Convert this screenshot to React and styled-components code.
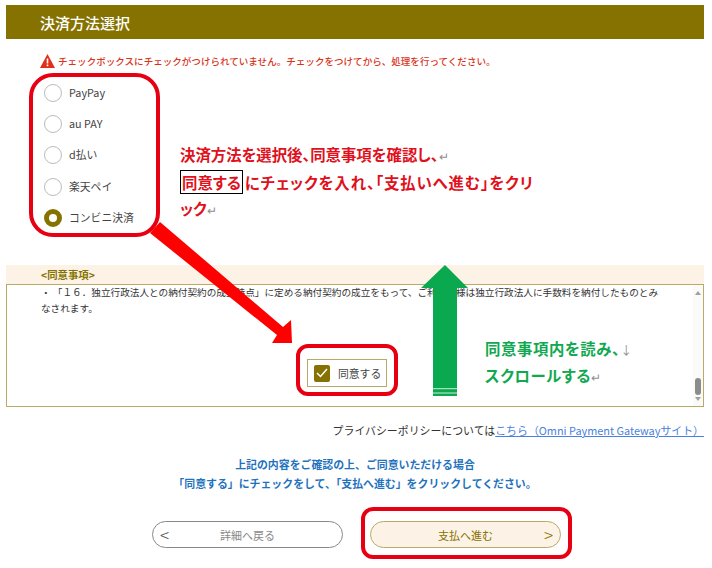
import React from 'react';
import styled, { createGlobalStyle } from 'styled-components';

const Global = createGlobalStyle`
  html, body { margin: 0; padding: 0; background: #fff; }
  body { font-family: "Noto Sans CJK JP", "Noto Sans", sans-serif; }
`;
const OLIVE = '#857200';
const GOLD = '#b9aa68';
const CREAM = '#fdf2e6';
const MARKER = '#e60012';

const Page = styled.div`
  position: relative; width: 712px; height: 568px; overflow: hidden;
  padding: 5px 8px 0 6px; box-sizing: border-box;
`;
const TitleBar = styled.h1`
  margin: 0; height: 34px; background: ${OLIVE}; color: #fff; padding-left: 34px;
  font-size: 15px; font-weight: 500; line-height: 36px;
`;
const ErrorRow = styled.div`
  display: flex; align-items: center; gap: 3px; margin: 14px 0 0 34px; height: 16px;
  color: #d9331a; font-size: 9.55px; font-weight: 500; white-space: nowrap;
`;
const RadioFrame = styled.div`
  display: flex; flex-direction: column; gap: 13.2px; box-sizing: border-box;
  width: 131px; height: 164px; margin: 4px 0 0 23px; padding: 7px 0 0 11px;
  border: 4px solid ${MARKER}; border-radius: 24px;
`;
const RadioRow = styled.label`
  display: flex; align-items: center; gap: 7px; height: 18px;
  font-size: 10.8px; color: #444;
`;
const RadioMark = styled.span`
  width: 18px; height: 18px; box-sizing: border-box; border-radius: 50%; background: #fff;
  border: ${p => (p.$on ? `5.5px solid ${OLIVE}` : '1px solid #bbb')};
`;
const RadioText = styled.span`
  margin-top: -2px;
`;
const AgreementHead = styled.div`
  margin-top: 28px; height: 19px; background: ${CREAM}; padding-left: 35px;
  color: ${OLIVE}; font-size: 10.4px; font-weight: 700; line-height: 19px;
`;
const AgreementBox = styled.div`
  position: relative; height: 123px; box-sizing: border-box; border: 1px solid ${GOLD};
  padding: 0 0 0 34px; font-size: 9.65px; line-height: 16px; color: #333; background: #fff;
`;
const Clause = styled.p`
  margin: -1px 0 0; white-space: pre-line;
`;
const AgreeFrame = styled.div`
  display: flex; box-sizing: border-box; width: 102px; height: 52px;
  margin: 28px 0 0 255px; padding: 11px 0 0 7px;
  border: 4px solid ${MARKER}; border-radius: 12px;
`;
const AgreeLabel = styled.label`
  display: flex; align-items: center; gap: 8px; width: 80px; height: 28px; box-sizing: border-box;
  border: 1px solid ${GOLD}; padding-left: 6px; font-size: 10.8px; color: #444; white-space: nowrap; background: #fff;
`;
const CheckMark = styled.span`
  display: flex; align-items: center; justify-content: center; width: 16px; height: 17px;
  background: ${OLIVE}; border-radius: 2px;
`;
const ScrollTrack = styled.div`
  position: absolute; top: 0; right: 0; bottom: 0; width: 10px; background: #fafafa;
  display: flex; flex-direction: column; align-items: center; padding: 6px 0 5px; box-sizing: border-box;
`;
const ScrollArrowUp = styled.span`
  width: 0; height: 0;
  border: 3px solid transparent; border-top-width: 0; border-bottom: 4px solid #a0a0a0;
`;
const ScrollArrowDown = styled.span`
  width: 0; height: 0; margin-top: 2px;
  border: 3px solid transparent; border-bottom-width: 0; border-top: 4px solid #a0a0a0;
`;
const ScrollThumb = styled.span`
  width: 6px; height: 17px; margin-top: auto; border-radius: 3px; background: #8c8c8c;
`;
const PrivacyLine = styled.p`
  margin: 15px 0 0; text-align: right; font-size: 10.9px; line-height: 16px; color: #333; white-space: nowrap;
`;
const PrivacyLink = styled.a`
  color: #4a7fe0; text-decoration: underline;
`;
const Notice = styled.p`
  margin: 17px 0 0; text-align: center; font-size: 10.9px; font-weight: 700; line-height: 19px; color: #1f72bd;
`;
const ButtonRow = styled.div`
  display: flex; align-items: flex-start; gap: 18px; margin: 14px 0 0 146px;
`;
const BackSlot = styled.div`
  padding-top: 14px;
`;
const ForwardFrame = styled.div`
  box-sizing: border-box; width: 211px; height: 52px; padding: 10px 0 0 5px;
  border: 4px solid ${MARKER}; border-radius: 12px;
`;
const PillButton = styled.button`
  display: grid; grid-template-columns: 30px 1fr 30px; align-items: center; text-align: center;
  width: 191px; height: 27px; box-sizing: border-box; border-radius: 14px; padding: 0 7px; font: inherit; font-size: 11px;
  background: ${p => (p.$primary ? CREAM : '#fff')};
  border: 1px solid ${p => (p.$primary ? GOLD : '#888')};
  color: ${p => (p.$primary ? OLIVE : '#888')};
`;
const Chevron = styled.span`
  font-size: 17px; font-weight: 300; line-height: 20px; text-align: ${p => (p.$right ? 'right' : 'left')};
  color: ${p => (p.$right ? OLIVE : '#555')};
`;
const ArrowLayer = styled.svg`
  position: absolute; left: 0; top: 0; width: 712px; height: 568px; pointer-events: none;
`;
const RedNote = styled.div`
  position: absolute; left: 180px; top: 141px; width: 360px; color: #e0101c;
  font-size: 15.4px; font-weight: 700; line-height: 26px; font-feature-settings: "palt"; white-space: nowrap;
`;
const WideLine = styled.span`
  letter-spacing: 0.85px;
`;
const GreenNote = styled.div`
  position: absolute; left: 485px; top: 336px; color: #10a850;
  font-size: 15.4px; font-weight: 700; line-height: 25.5px; letter-spacing: 0.6px; font-feature-settings: "palt"; white-space: nowrap;
`;
const Boxed = styled.span`
  border: 1px solid #000; padding: 0 1px; margin-right: 2px; letter-spacing: 0;
`;
const ReturnMark = styled.span`
  color: #8f8f8f; font-size: 12px; font-weight: 400;
`;

const methods = [['PayPay', false], ['au PAY', false], ['d払い', false], ['楽天ペイ', false], ['コンビニ決済', true]];

export default function App() {
  return (
    <Page>
      <Global />
      <TitleBar>決済方法選択</TitleBar>
      <ErrorRow>
        <svg width="15" height="14" viewBox="0 0 15 14">
          <path d="M7.5 0 L15 14 H0 Z" fill="#e0301a" />
          <rect x="6.7" y="4.5" width="1.6" height="5" fill="#fff" />
          <rect x="6.7" y="10.5" width="1.6" height="1.7" fill="#fff" />
        </svg>
        チェックボックスにチェックがつけられていません。チェックをつけてから、処理を行ってください。
      </ErrorRow>
      <RadioFrame>
        {methods.map(([name, on]) => (
          <RadioRow key={name}><RadioMark $on={on} /><RadioText>{name}</RadioText></RadioRow>
        ))}
      </RadioFrame>
      <AgreementHead>&lt;同意事項&gt;</AgreementHead>
      <AgreementBox>
        <Clause>{'・ 「１６．独立行政法人との納付契約の成立時点」に定める納付契約の成立をもって、ご利用者様は独立行政法人に手数料を納付したものとみ\nなされます。'}</Clause>
        <AgreeFrame>
          <AgreeLabel>
            <CheckMark>
              <svg width="12" height="10" viewBox="0 0 12 10"><path d="M1 5 L4.5 8.5 L11 1" fill="none" stroke="#fff" strokeWidth="1.5" /></svg>
            </CheckMark>
            同意する
          </AgreeLabel>
        </AgreeFrame>
        <ScrollTrack><ScrollArrowUp /><ScrollThumb /><ScrollArrowDown /></ScrollTrack>
      </AgreementBox>
      <PrivacyLine>プライバシーポリシーについては<PrivacyLink href="#">こちら（Omni Payment Gatewayサイト）</PrivacyLink></PrivacyLine>
      <Notice>上記の内容をご確認の上、ご同意いただける場合<br />「同意する」にチェックをして、「支払へ進む」をクリックしてください。</Notice>
      <ButtonRow>
        <BackSlot>
          <PillButton><Chevron>&lt;</Chevron>詳細へ戻る<span /></PillButton>
        </BackSlot>
        <ForwardFrame>
          <PillButton $primary><span />支払へ進む<Chevron $right>&gt;</Chevron></PillButton>
        </ForwardFrame>
      </ButtonRow>

      <ArrowLayer viewBox="0 0 712 568">
        <path d="M150 233 L160 222 L283 327 L291 320 L292 343 L272 343 L277 335 Z" fill="#ff0000" />
        <path d="M433 396 V288 H421 L445 265 L468 288 H457 V396 Z" fill="#0aa84f" />
        <path d="M433 388.7 H457 M433 393 H457" stroke="#fff" strokeWidth="0.8" />
      </ArrowLayer>
      <RedNote>
        決済方法を選択後、同意事項を確認し、<ReturnMark>↵</ReturnMark><br />
        <WideLine><Boxed>同意する</Boxed>にチェックを入れ、「支払いへ進む」をクリ</WideLine><br />
        ック<ReturnMark>↵</ReturnMark>
      </RedNote>
      <GreenNote>
        同意事項内を読み、<ReturnMark>↓</ReturnMark><br />
        スクロールする<ReturnMark>↵</ReturnMark>
      </GreenNote>
    </Page>
  );
}
